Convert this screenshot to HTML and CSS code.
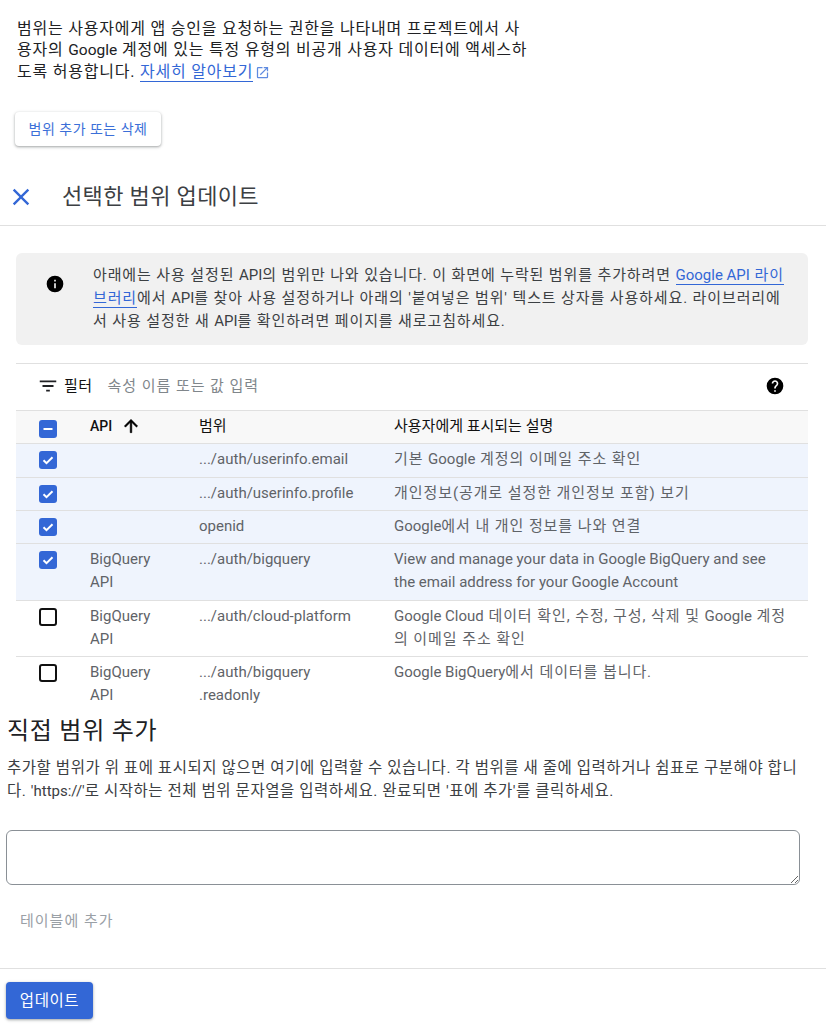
FILE: index.html
```html
<!DOCTYPE html>
<html lang="ko">
<head>
<meta charset="utf-8">
<title>선택한 범위 업데이트</title>
<link rel="stylesheet" href="styles.css">
</head>
<body>
<section class="intro">
  <p class="intro-text">범위는 사용자에게 앱 승인을 요청하는 권한을 나타내며 프로젝트에서 사용자의 <span class="lat">Google</span> 계정에 있는 특정 유형의 비공개 사용자 데이터에 액세스하도록 허용합니다. <a class="link" href="#">자세히 알아보기</a><svg class="ext" viewBox="0 0 24 24"><path d="M19 19H5V5h7V3H5a2 2 0 0 0-2 2v14a2 2 0 0 0 2 2h14a2 2 0 0 0 2-2v-7h-2v7zM14 3v2h3.59l-9.83 9.83 1.41 1.41L19 6.41V10h2V3h-7z"/></svg></p>
  <button class="raised">범위 추가 또는 삭제</button>
</section>
<header class="panel-head">
  <svg class="close" viewBox="0 0 24 24"><path d="M19 6.41 17.59 5 12 10.59 6.41 5 5 6.41 10.59 12 5 17.59 6.41 19 12 13.41 17.59 19 19 17.59 13.41 12z"/></svg>
  <h1 class="panel-title">선택한 범위 업데이트</h1>
</header>
<section class="content">
  <div class="notice">
    <svg class="notice-icon" viewBox="0 0 24 24"><path d="M12 2a10 10 0 1 0 0 20 10 10 0 0 0 0-20zm1 15h-2v-6h2v6zm0-8h-2V7h2v2z"/></svg>
    <p class="notice-text">아래에는 사용 설정된 <span class="lat">API</span>의 범위만 나와 있습니다. 이 화면에 누락된 범위를 추가하려면 <a class="link" href="#"><span class="lat">Google API</span> 라이브러리</a>에서 <span class="lat">API</span>를 찾아 사용 설정하거나 아래의 '붙여넣은 범위' 텍스트 상자를 사용하세요. 라이브러리에서 사용 설정한 새 <span class="lat">API</span>를 확인하려면 페이지를 새로고침하세요.</p>
  </div>
  <div class="filter">
    <svg class="filter-icon" viewBox="0 0 24 24"><path d="M10 18h4v-2h-4v2zM3 6v2h18V6H3zm3 7h12v-2H6v2z"/></svg>
    <span class="filter-label">필터</span>
    <span class="filter-hint">속성 이름 또는 값 입력</span>
    <svg class="help" viewBox="0 0 24 24"><path d="M12 2a10 10 0 1 0 0 20 10 10 0 0 0 0-20zm1 17h-2v-2h2v2zm2.07-7.75-.9.92C13.45 12.9 13 13.5 13 15h-2v-.5c0-1.1.45-2.1 1.17-2.83l1.24-1.26c.37-.36.59-.86.59-1.41 0-1.1-.9-2-2-2s-2 .9-2 2H8c0-2.21 1.79-4 4-4s4 1.79 4 4c0 .88-.36 1.68-.93 2.25z"/></svg>
  </div>
  <table class="scopes">
    <colgroup><col class="c-check"><col class="c-api"><col class="c-scope"><col></colgroup>
    <thead>
      <tr>
        <th><span class="box on"><svg viewBox="0 0 18 18"><path class="mark" d="M4.5 9h9"/></svg></span></th>
        <th><span class="api-sort">API<svg class="arrow" viewBox="0 0 24 24"><path d="M4 12l1.41 1.41L11 7.83V20h2V7.83l5.58 5.59L20 12l-8-8-8 8z"/></svg></span></th>
        <th>범위</th>
        <th>사용자에게 표시되는 설명</th>
      </tr>
    </thead>
    <tbody>
      <tr class="sel r34">
        <td><span class="box on"><svg viewBox="0 0 18 18"><path class="mark" d="M4.5 9.2l3 3 6-6"/></svg></span></td>
        <td></td><td class="scope">.../auth/userinfo.email</td><td>기본 <span class="lat">Google</span> 계정의 이메일 주소 확인</td>
      </tr>
      <tr class="sel r33">
        <td><span class="box on"><svg viewBox="0 0 18 18"><path class="mark" d="M4.5 9.2l3 3 6-6"/></svg></span></td>
        <td></td><td class="scope">.../auth/userinfo.profile</td><td>개인정보(공개로 설정한 개인정보 포함) 보기</td>
      </tr>
      <tr class="sel r33">
        <td><span class="box on"><svg viewBox="0 0 18 18"><path class="mark" d="M4.5 9.2l3 3 6-6"/></svg></span></td>
        <td></td><td class="scope">openid</td><td><span class="lat">Google</span>에서 내 개인 정보를 나와 연결</td>
      </tr>
      <tr class="sel tall">
        <td><span class="box on"><svg viewBox="0 0 18 18"><path class="mark" d="M4.5 9.2l3 3 6-6"/></svg></span></td>
        <td class="api">BigQuery API</td><td class="scope">.../auth/bigquery</td><td class="latin-cell">View and manage your data in Google BigQuery and see the email address for your Google Account</td>
      </tr>
      <tr>
        <td><span class="box"></span></td>
        <td class="api">BigQuery API</td><td class="scope">.../auth/cloud-platform</td><td><span class="lat">Google Cloud</span> 데이터 확인, 수정, 구성, 삭제 및 <span class="lat">Google</span> 계정의 이메일 주소 확인</td>
      </tr>
      <tr class="last">
        <td><span class="box"></span></td>
        <td class="api">BigQuery API</td><td class="scope">.../auth/bigquery<br>.readonly</td><td><span class="lat">Google BigQuery</span>에서 데이터를 봅니다.</td>
      </tr>
    </tbody>
  </table>
</section>
<section class="manual">
  <h2 class="manual-title">직접 범위 추가</h2>
  <p class="manual-text">추가할 범위가 위 표에 표시되지 않으면 여기에 입력할 수 있습니다. 각 범위를 새 줄에 입력하거나 쉼표로 구분해야 합니다. <span class="lat">'https://'</span>로 시작하는 전체 범위 문자열을 입력하세요. 완료되면 '표에 추가'를 클릭하세요.</p>
  <textarea class="scope-input" aria-label="범위"></textarea>
  <button class="text-btn" disabled>테이블에 추가</button>
</section>
<footer class="foot">
  <button class="primary">업데이트</button>
</footer>
</body>
</html>
```
FILE: styles.css
```css
* { box-sizing: border-box; }
html, body { margin: 0; padding: 0; }
body {
  width: 826px;
  height: 1024px;
  overflow: hidden;
  background: #fff;
  color: #202124;
  font-family: Roboto, "Noto Sans CJK KR", "Noto Sans", sans-serif;
  font-size: 14px;
}
p, h1, h2 { margin: 0; font-weight: 400; }
button { font-family: inherit; cursor: pointer; }
.lat { font-size: 15px; letter-spacing: 0; }
.link { color: #3367d6; text-decoration: none; border-bottom: 1px solid #3367d6; }
.intro { padding: 18px 0 0 17px; }
.intro-text { width: 512px; font-size: 16px; letter-spacing: .78px; line-height: 21px; }
.intro-text .lat { font-size: 15.5px; }
.ext { width: 15px; height: 15px; margin-left: 2px; vertical-align: -3px; fill: #5f8be0; }
.raised {
  display: block;
  width: 146px;
  height: 34px;
  margin: 30px 0 0 -2px;
  padding: 0 0 3px;
  border: 0;
  border-radius: 4px;
  background: #fff;
  color: #3b6fd8;
  font-size: 14px;
  letter-spacing: .5px;
  box-shadow: 0 1px 2px rgba(60,64,67,.3), 0 1px 3px 1px rgba(60,64,67,.15);
}
.panel-head {
  display: flex;
  align-items: center;
  height: 80px;
  padding: 22px 0 0 7px;
  border-bottom: 1px solid #e0e0e0;
}
.close { width: 28px; height: 28px; fill: #3367d6; flex: none; }
.panel-title { margin-left: 27px; font-size: 22px; line-height: 28px; color: #3c4043; letter-spacing: .35px; }
.content { padding: 27px 18px 0 16px; }
.notice {
  display: flex;
  height: 92px;
  padding: 11px 20px 0 29px;
  border-radius: 6px;
  background: #f1f1f1;
}
.notice-icon { width: 20px; height: 20px; margin-top: 10px; flex: none; fill: #000; }
.notice-text { margin-left: 28px; font-size: 15px; letter-spacing: .88px; line-height: 23px; color: #3c4043; }
.filter {
  display: flex;
  align-items: center;
  height: 47px;
  margin-top: 18px;
  padding: 0 23px 2px 21px;
  border-top: 1px solid #e0e0e0;
}
.filter-icon { width: 22px; height: 22px; flex: none; fill: #202124; }
.filter-label { margin: 0 0 4px 5px; font-size: 15px; letter-spacing: .5px; color: #111; }
.filter-hint { margin: 0 0 4px 15px; font-size: 15px; letter-spacing: .95px; color: #80868b; }
.help { width: 20px; height: 20px; margin-left: auto; fill: #000; }
.scopes { width: 792px; border-collapse: collapse; table-layout: fixed; }
.c-check { width: 74px; }
.c-api { width: 109px; }
.c-scope { width: 195px; }
.scopes th, .scopes td { padding: 0 20px 0 0; text-align: left; vertical-align: top; }
.scopes th {
  height: 33px;
  padding-top: 5px;
  border-top: 1px solid #e0e0e0;
  border-bottom: 1px solid #e0e0e0;
  background: #f8f8f8;
  font-size: 15px;
  font-weight: 400;
  line-height: 20px;
  color: #111;
}
.scopes td {
  padding-top: 4px;
  padding-bottom: 5px;
  border-bottom: 1px solid #e0e0e0;
  font-size: 15px;
  letter-spacing: .92px;
  line-height: 23px;
  color: #5f6368;
}
.scopes .api { padding-right: 40px; font-size: 15px; letter-spacing: 0; }
.scopes .scope { font-size: 15px; letter-spacing: 0; }
.scopes .latin-cell { font-size: 15px; letter-spacing: 0; }
.scopes .r34 td { height: 34px; }
.scopes .r33 td { height: 33px; }
.scopes .tall td { height: 57px; }
.scopes .sel td { background: #eff4fd; }
.scopes .last td { border-bottom: 0; }
.scopes th:first-child, .scopes td:first-child { padding-left: 23px; padding-right: 0; }
.scopes th:first-child { padding-top: 9px; }
.box {
  display: block;
  width: 18px;
  height: 18px;
  border: 2px solid #111;
  border-radius: 3px;
  margin-top: 3px;
}
.scopes th .box { margin-top: 0; }
.box.on { border: 0; background: #3367d6; }
.box svg { display: block; width: 18px; height: 18px; }
.mark { fill: none; stroke: #fff; stroke-width: 2; }
.api-sort { display: flex; align-items: center; font-size: 14px; font-weight: 500; }
.arrow { width: 20px; height: 20px; margin-left: 9px; fill: #000; stroke: #000; stroke-width: .6; }
.manual { padding: 0 0 0 7px; }
.manual-title { margin-top: 4px; font-size: 24px; letter-spacing: .75px; line-height: 30px; color: #202124; }
.manual-text { width: 800px; margin-top: 11px; font-size: 15.5px; letter-spacing: .55px; line-height: 23px; color: #3c4043; }
.scope-input {
  display: block;
  width: 794px;
  height: 55px;
  margin: 27px 0 0 -1px;
  border: 1px solid #8a9096;
  border-radius: 6px;
  background: #fff;
  resize: both;
  outline: 0;
}
.text-btn {
  display: block;
  height: 36px;
  margin: 16px 0 0 13px;
  padding: 0;
  border: 0;
  background: none;
  color: #9aa0a6;
  font-size: 15px;
  letter-spacing: 1px;
}
.foot { margin-top: 31px; padding: 13px 0 0 6px; border-top: 1px solid #e0e0e0; }
.primary {
  display: block;
  width: 87px;
  height: 37px;
  padding: 0 0 3px;
  border: 0;
  border-radius: 4px;
  background: #3367d6;
  color: #fff;
  font-size: 15.5px;
  letter-spacing: .6px;
  font-weight: 400;
  box-shadow: 0 1px 2px rgba(60,64,67,.3), 0 1px 3px 1px rgba(60,64,67,.15);
}
```
